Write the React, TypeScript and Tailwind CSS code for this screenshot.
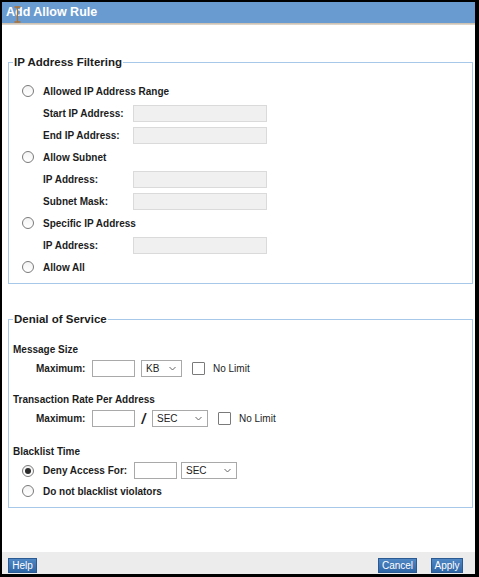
import React from 'react';

const font = { fontFamily: '"Liberation Sans", Arial, sans-serif' };

// radio button, optionally checked
const Radio = ({ checked = false }: { checked?: boolean }) => (
    <span className="w-[12px] h-[12px] rounded-full border border-[#7a7a7a] bg-gradient-to-b from-[#f4f4f4] to-white flex items-center justify-center shrink-0">
        {checked && <span className="w-[6px] h-[6px] rounded-full bg-[#2b2b2b]" />}
    </span>
);

const Check = () => (
    <span className="block w-[13px] h-[13px] border border-[#7a7a7a] bg-white rounded-[1px] shrink-0" />
);

const Select = ({ value, width }: { value: string; width: string }) => (
    <span className={`${width} h-[17px] border border-[#a9a9a9] bg-white flex items-center justify-between pl-[4px] pr-[5px] text-[10px] text-[#222] font-normal`}>
        {value}
        <svg width="7" height="5" viewBox="0 0 7 5">
            <polyline points="0.5,1 3.5,4 6.5,1" fill="none" stroke="#666" strokeWidth="1" />
        </svg>
    </span>
);

const RadioRow = ({ label, checked = false }: { label: string; checked?: boolean }) => (
    <div className="h-[22px] flex items-center pl-[13px] gap-[9px]">
        <Radio checked={checked} />
        <span>{label}</span>
    </div>
);

const FieldRow = ({ label }: { label: string }) => (
    <div className="h-[22px] flex items-center pl-[34px]">
        <span className="w-[90px]">{label}</span>
        <span className="w-[134px] h-[17px] bg-[#f0f0f0] border border-[#dadada]" />
    </div>
);

const Btn = ({ label, width }: { label: string; width: string }) => (
    <button className={`${width} h-[15px] bg-gradient-to-b from-[#4f86c4] to-[#2f66a6] border border-[#2b5a92] text-white text-[10px] leading-none flex items-center justify-center`}>
        {label}
    </button>
);

export default function App() {
    return (
        <div className="w-[479px] h-[577px] bg-black pt-[2px] pl-[2px] pr-[4px] pb-[3px]" style={font}>
            <div className="w-full h-full bg-white flex flex-col text-[10px] font-bold text-[#1c1c1c] relative">
                {/* title bar */}
                <div className="h-[21px] bg-[#6a9bd0] flex items-center pl-[4px] text-white text-[12.5px] font-bold">
                    Add Allow Rule
                </div>
                <div className="h-[2px] bg-gradient-to-b from-[#c9bca8] to-[#e2ddd6]" />
                {/* cursor artefact */}
                <svg className="absolute left-[12px] top-[4px]" width="7" height="17" viewBox="0 0 7 17">
                    <path d="M0.5 1 H6.5 M3.5 1 V16 M0.5 16 H6.5" stroke="#b0712e" strokeWidth="1.3" fill="none" />
                </svg>

                {/* IP Address Filtering */}
                <fieldset className="mt-[30px] ml-[6px] mr-[2px] border border-[#a8c8ea] pt-[11px] pb-[5px]">
                    <legend className="ml-[4px] px-[1px] text-[11.5px] leading-[14px]">IP Address Filtering</legend>
                    <RadioRow label="Allowed IP Address Range" />
                    <FieldRow label="Start IP Address:" />
                    <FieldRow label="End IP Address:" />
                    <RadioRow label="Allow Subnet" />
                    <FieldRow label="IP Address:" />
                    <FieldRow label="Subnet Mask:" />
                    <RadioRow label="Specific IP Address" />
                    <FieldRow label="IP Address:" />
                    <RadioRow label="Allow All" />
                </fieldset>

                {/* Denial of Service */}
                <fieldset className="mt-[28px] ml-[6px] mr-[2px] border border-[#a8c8ea] pt-[17px] pb-[9px]">
                    <legend className="ml-[4px] px-[1px] text-[11.5px] leading-[14px]">Denial of Service</legend>

                    <div className="h-[14px] leading-[14px] pl-[4px]">Message Size</div>
                    <div className="mt-[3px] h-[17px] flex items-center pl-[27px]">
                        <span className="w-[56px]">Maximum:</span>
                        <span className="w-[43px] h-[17px] border border-[#a9a9a9] bg-white" />
                        <span className="ml-[6px] flex"><Select value="KB" width="w-[41px]" /></span>
                        <span className="ml-[10px] flex"><Check /></span>
                        <span className="ml-[8px] font-normal">No Limit</span>
                    </div>

                    <div className="mt-[16px] h-[14px] leading-[14px] pl-[4px]">Transaction Rate Per Address</div>
                    <div className="mt-[3px] h-[17px] flex items-center pl-[27px]">
                        <span className="w-[56px]">Maximum:</span>
                        <span className="w-[43px] h-[17px] border border-[#a9a9a9] bg-white" />
                        <span className="w-[17px] text-center text-[14px] font-bold italic leading-none">/</span>
                        <Select value="SEC" width="w-[56px]" />
                        <span className="ml-[10px] flex"><Check /></span>
                        <span className="ml-[8px] font-normal">No Limit</span>
                    </div>

                    <div className="mt-[18px] h-[14px] leading-[14px] pl-[4px]">Blacklist Time</div>
                    <div className="mt-[3px] h-[17px] flex items-center pl-[13px]">
                        <Radio checked />
                        <span className="ml-[9px] w-[91px]">Deny Access For:</span>
                        <span className="w-[43px] h-[17px] border border-[#a9a9a9] bg-white" />
                        <span className="ml-[4px] flex"><Select value="SEC" width="w-[56px]" /></span>
                    </div>
                    <div className="mt-[5px] h-[14px] flex items-center pl-[13px] gap-[9px]">
                        <Radio />
                        <span>Do not blacklist violators</span>
                    </div>
                </fieldset>

                <div className="flex-1" />

                {/* footer */}
                <div className="h-[22px] bg-[#ececec] flex items-start pt-[6px] pl-[6px] pr-[12px] font-normal">
                    <Btn label="Help" width="w-[29px]" />
                    <div className="flex-1" />
                    <Btn label="Cancel" width="w-[39px]" />
                    <span className="ml-[14px] flex"><Btn label="Apply" width="w-[32px]" /></span>
                </div>
            </div>
        </div>
    );
}
